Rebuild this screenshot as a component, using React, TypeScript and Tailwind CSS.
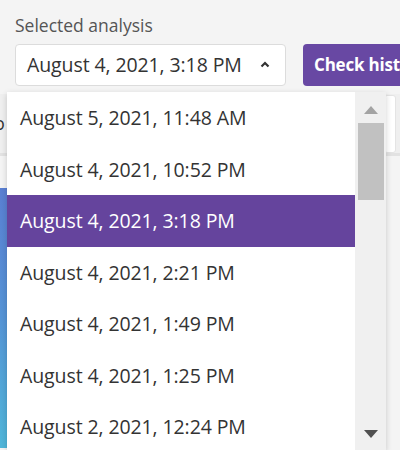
import React from "react";

const options = [
  "August 5, 2021, 11:48 AM",
  "August 4, 2021, 10:52 PM",
  "August 4, 2021, 3:18 PM",
  "August 4, 2021, 2:21 PM",
  "August 4, 2021, 1:49 PM",
  "August 4, 2021, 1:25 PM",
  "August 2, 2021, 12:24 PM",
];

const selected = "August 4, 2021, 3:18 PM";

export default function App() {
  return (
    <div
      className="relative w-[400px] h-[450px] overflow-hidden bg-[#f4f4f4] text-[#333]"
      style={{ fontFamily: '"Open Sans", "Noto Sans", sans-serif' }}
    >
      <div className="px-[15px] pt-[13px]">
        <p className="text-[17.5px] leading-[24px] text-[#555]">Selected analysis</p>
        <div className="mt-[7px] flex items-center gap-[17px]">
          <div className="flex h-[42px] w-[271px] shrink-0 items-center justify-between rounded-[4px] border border-[#dcdcdc] bg-white pl-[11px] pr-[14px]">
            <span className="text-[19.5px] tracking-[-0.1px] text-[#333]">{selected}</span>
            <svg className="w-[12px] h-[12px] text-[#333]" fill="none" stroke="currentColor" strokeWidth={2.2} viewBox="0 0 12 12" aria-hidden="true">
              <path d="M2.5 7.5 6 4l3.5 3.5" />
            </svg>
          </div>
          <button className="h-[42px] shrink-0 whitespace-nowrap rounded-[4px] bg-[#6848a3] px-[11px] text-[17px] font-bold tracking-[-0.2px] text-white">
            Check history
          </button>
        </div>
      </div>

      {/* page content behind the open list */}
      <div className="mt-[8px]">
        <div className="flex h-[62px] items-center border-b-[3px] border-[#e2e2e2] bg-[#efefef] pl-[2px]">
          <span className="-ml-[8px] text-[18px] text-[#333]">o</span>
          <div className="ml-auto mr-[4px] h-[58px] w-[12px] rounded-[3px] border border-[#e4e4e4] bg-white" />
        </div>
        <div className="mt-[32px] h-[260px] w-[12px] bg-gradient-to-b from-[#5a7fd2] via-[#5594d6] to-[#4fb6d9]" />
      </div>

      {/* open dropdown list */}
      <div className="absolute left-[7px] top-[92px] flex h-[358px] w-[379px] bg-white shadow-[0_2px_6px_rgba(0,0,0,0.18)]">
        <ul className="flex-1">
          {options.map((o) => (
            <li
              key={o}
              className={`flex h-[51.5px] items-center pl-[13px] text-[19.5px] tracking-[-0.1px] ${
                o === selected ? "bg-[#65449d] text-white" : "text-[#333]"
              }`}
            >
              {o}
            </li>
          ))}
        </ul>
        <div className="flex w-[31px] flex-col items-center bg-[#f0f0f0] pt-[14px]">
          <svg className="w-[14px] h-[8px]" viewBox="0 0 14 8" aria-hidden="true">
            <path d="M7 0 14 8H0z" fill="#a3a3a3" />
          </svg>
          <div className="mt-[9px] h-[77px] w-[26px] bg-[#c1c1c1]" />
          <div className="flex-1" />
          <svg className="mb-[12px] w-[14px] h-[8px]" viewBox="0 0 14 8" aria-hidden="true">
            <path d="M0 0h14L7 8z" fill="#505050" />
          </svg>
        </div>
      </div>
    </div>
  );
}
